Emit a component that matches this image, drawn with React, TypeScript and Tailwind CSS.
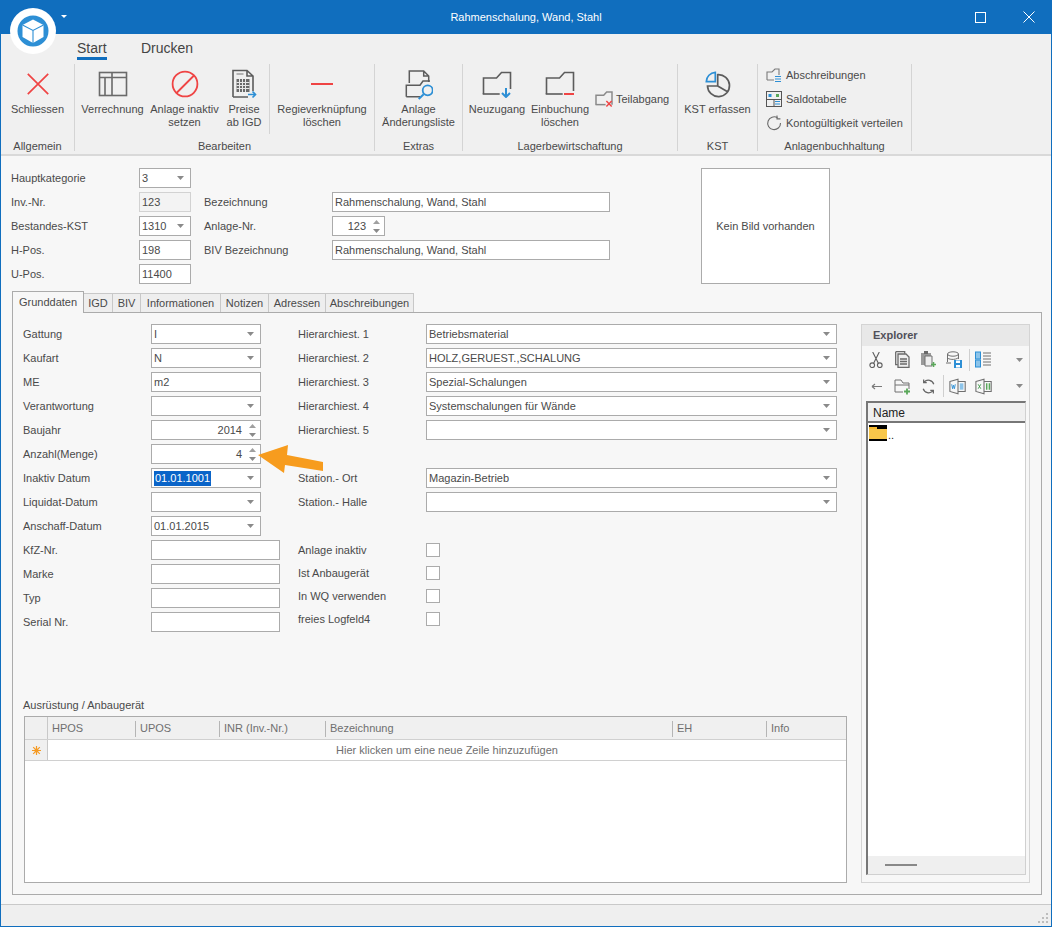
import React from "react";

const Caret = () => (
  <svg width="7" height="4" viewBox="0 0 7 4" className="shrink-0"><path d="M0 0h7L3.5 4z" fill="#8a8a8a" /></svg>
);
const Spin = () => (
  <div className="flex flex-col items-center gap-[3px] w-[9px] shrink-0">
    <svg width="7" height="5" viewBox="0 0 7 5"><path d="M0 4L3.5 0 7 4z" fill="#a0a0a0" /></svg>
    <svg width="7" height="5" viewBox="0 0 7 5"><path d="M0 1h7L3.5 5z" fill="#8a8a8a" /></svg>
  </div>
);

type FProps = { w: string; v?: string; kind?: "text" | "select" | "spin"; disabled?: boolean; sel?: boolean };
function Field({ w, v = "", kind = "text", disabled, sel }: FProps) {
  return (
    <div className={`${w} h-[20px] shrink-0 flex items-center border ${disabled ? "bg-[#f3f3f3] border-[#d2d2d2]" : "bg-white border-[#ababab]"} ${kind === "spin" ? "pl-1 pr-[3px]" : "pl-[2px] pr-[6px]"}`}>
      {kind === "spin" ? (
        <span className="flex-1 text-right pr-[6px] whitespace-nowrap">{v}</span>
      ) : sel ? (
        <span className="flex-1"><span className="bg-[#0a64c8] text-white inline-block leading-[15px] pl-[1px] pr-[1px]">{v}</span></span>
      ) : (
        <span className="flex-1 whitespace-nowrap">{v}</span>
      )}
      {kind === "select" && <Caret />}
      {kind === "spin" && <Spin />}
    </div>
  );
}

function Row({ label, lw, children, h = "h-[24px]" }: { label: string; lw: string; children?: React.ReactNode; h?: string }) {
  return (
    <div className={`flex items-center ${h}`}>
      <span className={`${lw} shrink-0 whitespace-nowrap`}>{label}</span>
      {children}
    </div>
  );
}

const RedX = () => (
  <svg width="26" height="26" viewBox="0 0 28 28"><path d="M3 3l22 22M25 3L3 25" stroke="#ef4444" strokeWidth="1.8" fill="none" /></svg>
);
const TableIco = () => (
  <svg width="30" height="26" viewBox="0 0 30 26" fill="none" stroke="#6a6a6a" strokeWidth="1.6"><rect x="1.5" y="1.5" width="27" height="23" /><path d="M1.5 6.5h27M7 6.5v18M14 1.5v23" /></svg>
);
const Ban = () => (
  <svg width="28" height="28" viewBox="0 0 28 28" fill="none" stroke="#ef4444" strokeWidth="1.8"><circle cx="14" cy="14" r="12.4" /><path d="M5.5 23L23 5.5" /></svg>
);
const Preise = () => (
  <svg width="28" height="30" viewBox="0 0 28 30" fill="none">
    <path d="M3 28V1.5h14L23 7v15M17 1.5V7h6M3 28h15" stroke="#5c5c5c" strokeWidth="1.6" />
    <path d="M6.5 5h7" stroke="#8a8a8a" strokeWidth="1.2" />
    <path d="M6.5 10h13v13h-13z" fill="#6a6a6a" />
    <path d="M6.5 13.5h13M6.5 16.5h13M6.5 19.5h13M9.5 10v13M12.5 10v13M15.5 10v13" stroke="#e8e8e8" strokeWidth="1" />
    <path d="M18 25.5h7M22.5 22.5l3 3-3 3" stroke="#2d8fd5" strokeWidth="1.6" />
  </svg>
);
const Minus = () => (
  <svg width="22" height="4" viewBox="0 0 22 4"><path d="M0 2h22" stroke="#ef4444" strokeWidth="2" /></svg>
);
const Aenderung = () => (
  <svg width="28" height="31" viewBox="8 3 28 31" fill="none">
    <path d="M12.3 17V5h14.4l5 5v6M26.7 5v5h5" stroke="#5c5c5c" strokeWidth="1.5" />
    <path d="M9.3 30.7V19.3H23l3-4.3h7M9.3 30.7H23" stroke="#5c5c5c" strokeWidth="1.5" />
    <circle cx="30.7" cy="24.3" r="5" stroke="#2d8fd5" strokeWidth="1.8" />
    <path d="M26.7 28.3l-5 4.7" stroke="#2d8fd5" strokeWidth="2" />
  </svg>
);
const Folder = ({ small, end, children }: { small?: boolean; end: number; children?: React.ReactNode }) => (
  <svg width={small ? 18 : 30} height={small ? 16 : 27} viewBox="0 0 30 27" fill="none">
    <path d={`M1.5 23V7h13l5-5.5h9V${end}`} stroke={small ? "#8a8a8a" : "#5c5c5c"} strokeWidth={small ? 2.5 : 1.6} />
    <path d="M.7 23h17" stroke={small ? "#8a8a8a" : "#5c5c5c"} strokeWidth={small ? 2.5 : 1.6} />
    {children}
  </svg>
);
const Pie = () => (
  <svg width="26" height="27" viewBox="8 6 26 27" fill="none">
    <path d="M20.7 9.7A11 11 0 1 1 10.5 21h10.2zM20.7 21L31 27" stroke="#5c5c5c" strokeWidth="1.7" />
    <path d="M9.3 16.7h9V7.3a9.5 9.5 0 0 0-9 9.4z" stroke="#2d8fd5" strokeWidth="1.7" />
  </svg>
);
const SmAb = () => (
  <svg width="16" height="16" viewBox="0 0 16 16" fill="none">
    <path d="M1 13V5h5l3-3h4v6M1 13h7" stroke="#7a7a7a" strokeWidth="1.1" />
    <path d="M9 9.5h6M9 12h6M9 14.5h6" stroke="#2d8fd5" strokeWidth="1.2" />
  </svg>
);
const SmSaldo = () => (
  <svg width="16" height="16" viewBox="0 0 16 16" fill="none">
    <rect x=".5" y=".5" width="15" height="15" stroke="#555" />
    <path d="M.5 8.5h15M8 8.5v7" stroke="#555" />
    <rect x="2.5" y="3" width="3" height="3" fill="#2d8fd5" />
    <rect x="10" y="3" width="3" height="3" fill="#5aa85a" />
    <path d="M9 10.5h5M9 13h5" stroke="#2d8fd5" />
  </svg>
);
const SmRefresh = () => (
  <svg width="16" height="16" viewBox="0 0 16 16" fill="none">
    <path d="M11.5 2.8A6.4 6.4 0 1 0 14.5 8" stroke="#6a6a6a" strokeWidth="1.1" />
    <path d="M11 0.5v3.4h3.4" stroke="#6a6a6a" strokeWidth="1.1" />
  </svg>
);

function Big({ w, icon, a, b }: { w: string; icon: React.ReactNode; a: string; b?: string }) {
  return (
    <div className={`${w} shrink-0 flex flex-col items-center`}>
      <div className="h-[36px] shrink-0 flex items-center justify-center">{icon}</div>
      <div className="mt-[1px] leading-[13px] text-center whitespace-nowrap">{a}</div>
      {b && <div className="leading-[13px] text-center whitespace-nowrap">{b}</div>}
    </div>
  );
}

function Group({ w, label, children }: { w: string; label: string; children: React.ReactNode }) {
  return (
    <div className={`${w} shrink-0 h-[87px] border-r border-[#d4d4d4] flex flex-col`}>
      <div className="h-[76px] shrink-0 flex pt-[2px]">{children}</div>
      <div className="text-center leading-[13px] whitespace-nowrap">{label}</div>
    </div>
  );
}

const VSep = () => <div className="w-px h-[70px] bg-[#d4d4d4] -mt-[2px] shrink-0" />;

const Tab = ({ w, t, active }: { w: string; t: string; active?: boolean }) => (
  <div className={`${w} shrink-0 flex items-center justify-center border-t border-r ${active ? "h-[22px] bg-[#f7f7f7] border-l border-[#ababab] -mb-px z-10" : "h-[19px] bg-[#eeeeee] border-[#c8c8c8]"}`}>
    {t}
  </div>
);

const Check = () => <div className="w-[14px] h-[14px] border border-[#ababab] bg-white" />;

const Th = ({ w, t }: { w: string; t: string }) => (
  <div className={`${w} shrink-0 h-[23px] flex items-center pl-[4px] text-[#6f6f6f]`}>
    <span className="flex-1 whitespace-nowrap">{t}</span>
    <span className="w-px h-[16px] bg-[#b5b5b5]" />
  </div>
);

const TbSep = () => <div className="w-px h-[22px] bg-[#cfcfcf] shrink-0" />;
const Cell = ({ children }: { children: React.ReactNode }) => <div className="w-[26px] shrink-0 flex items-center justify-center">{children}</div>;

export default function App() {
  return (
    <div className="relative w-[1052px] h-[927px] overflow-hidden flex flex-col bg-[#f7f7f7] border-x border-b border-[#106ebe] text-[#4a4a4a] text-[11px] leading-[13px] font-['Liberation_Sans',Arial,sans-serif]">
      {/* Title bar */}
      <div className="h-[34px] shrink-0 bg-[#106ebe] -mx-px flex items-center text-white relative">
        <div className="flex-1 text-center">Rahmenschalung, Wand, Stahl</div>
        <div className="absolute right-[17px] top-0 h-[34px] flex items-center gap-[37px]">
          <svg width="11" height="11" viewBox="0 0 11 11"><rect x=".5" y=".5" width="10" height="10" fill="none" stroke="#fff" /></svg>
          <svg width="12" height="12" viewBox="0 0 12 12"><path d="M.5.5l11 11M11.5.5l-11 11" stroke="#fff" fill="none" /></svg>
        </div>
      </div>

      {/* App button */}
      <div className="absolute left-[9px] top-[8px] w-[46px] h-[46px] rounded-full bg-white z-20 flex items-center justify-center">
        <svg width="32" height="32" viewBox="0 0 32 32">
          <circle cx="16" cy="16" r="15.5" fill="#2d8fd5" />
          <path d="M16 4.5l10.5 5.5v12L16 28 5.5 22V10z" fill="#fff" />
          <path d="M5.5 10L16 15.5 26.5 10M16 15.5V28" stroke="#2d8fd5" strokeWidth="1.1" fill="none" />
        </svg>
      </div>
      <svg className="absolute left-[60px] top-[15px] z-20" width="6" height="3" viewBox="0 0 6 3"><path d="M0 0h6L3 3z" fill="#fff" /></svg>

      {/* Ribbon */}
      <div className="h-[122px] shrink-0 bg-[#f0f0f0] border-b-2 border-[#d9d9d9] flex flex-col">
        <div className="h-[30px] shrink-0 flex pl-[76px] text-[14px] text-[#444]">
          <div className="relative pt-[5px] w-[30px] leading-[18px] whitespace-nowrap">
            Start
            <div className="absolute left-0 w-[30px] top-[23px] h-[3px] bg-[#106ebe]" />
          </div>
          <div className="pt-[5px] ml-[34px] leading-[18px]">Drucken</div>
        </div>
        <div className="flex">
          <Group w="w-[74px]" label="Allgemein">
            <Big w="w-[73px]" icon={<RedX />} a="Schliessen" />
          </Group>
          <Group w="w-[300px]" label="Bearbeiten">
            <Big w="w-[75px]" icon={<TableIco />} a="Verrechnung" />
            <Big w="w-[69px]" icon={<Ban />} a="Anlage inaktiv" b="setzen" />
            <Big w="w-[50px]" icon={<Preise />} a="Preise" b="ab IGD" />
            <VSep />
            <Big w="w-[104px]" icon={<Minus />} a="Regieverknüpfung" b="löschen" />
          </Group>
          <Group w="w-[88px]" label="Extras">
            <Big w="w-[87px]" icon={<Aenderung />} a="Anlage" b="Änderungsliste" />
          </Group>
          <Group w="w-[215px]" label="Lagerbewirtschaftung">
            <Big w="w-[68px]" icon={<Folder end={18}><path d="M24 17v9M20 22l4 4 4-4" stroke="#2d8fd5" strokeWidth="2" /></Folder>} a="Neuzugang" />
            <Big w="w-[58px]" icon={<Folder end={20}><path d="M19 23h10" stroke="#ef4444" strokeWidth="2" /></Folder>} a="Einbuchung" b="löschen" />
            <div className="flex items-center gap-[3px] h-[14px] ml-[6px] mt-[26px] whitespace-nowrap">
              <Folder small end={23}><path d="M19 17l9 9M28 17l-9 9" stroke="#ef4444" strokeWidth="2.5" /></Folder>
              <span>Teilabgang</span>
            </div>
          </Group>
          <Group w="w-[80px]" label="KST">
            <Big w="w-[79px]" icon={<Pie />} a="KST erfassen" />
          </Group>
          <Group w="w-[154px]" label="Anlagenbuchhaltung">
            <div className="flex flex-col pl-[8px] -mt-[3px]">
              <div className="h-[24px] flex items-center gap-[4px] whitespace-nowrap"><SmAb />Abschreibungen</div>
              <div className="h-[24px] flex items-center gap-[4px] whitespace-nowrap"><SmSaldo />Saldotabelle</div>
              <div className="h-[24px] flex items-center gap-[4px] whitespace-nowrap"><SmRefresh />Kontogültigkeit verteilen</div>
            </div>
          </Group>
        </div>
      </div>

      {/* Header form */}
      <div className="flex shrink-0 pl-[10px] pt-[10px] h-[134px]">
        <div className="flex flex-col w-[193px] shrink-0">
          <Row label="Hauptkategorie" lw="w-[128px]"><Field w="w-[52px]" v="3" kind="select" /></Row>
          <Row label="Inv.-Nr." lw="w-[128px]"><Field w="w-[52px]" v="123" disabled /></Row>
          <Row label="Bestandes-KST" lw="w-[128px]"><Field w="w-[52px]" v="1310" kind="select" /></Row>
          <Row label="H-Pos." lw="w-[128px]"><Field w="w-[52px]" v="198" /></Row>
          <Row label="U-Pos." lw="w-[128px]"><Field w="w-[52px]" v="11400" /></Row>
        </div>
        <div className="flex flex-col w-[497px] shrink-0 pt-[24px]">
          <Row label="Bezeichnung" lw="w-[128px]"><Field w="w-[278px]" v="Rahmenschalung, Wand, Stahl" /></Row>
          <Row label="Anlage-Nr." lw="w-[128px]"><Field w="w-[53px]" v="123" kind="spin" /></Row>
          <Row label="BIV Bezeichnung" lw="w-[128px]"><Field w="w-[278px]" v="Rahmenschalung, Wand, Stahl" /></Row>
        </div>
        <div className="w-[129px] h-[116px] mt-[2px] bg-white border border-[#ababab] flex items-center justify-center">Kein Bild vorhanden</div>
      </div>

      {/* Tabs */}
      <div className="flex items-end ml-[11px] h-[22px] shrink-0">
        <Tab w="w-[72px]" t="Grunddaten" active />
        <Tab w="w-[29px]" t="IGD" />
        <Tab w="w-[28px]" t="BIV" />
        <Tab w="w-[80px]" t="Informationen" />
        <Tab w="w-[48px]" t="Notizen" />
        <Tab w="w-[57px]" t="Adressen" />
        <Tab w="w-[88px]" t="Abschreibungen" />
      </div>

      {/* Tab panel */}
      <div className="ml-[11px] mr-[9px] h-[583px] shrink-0 border border-[#ababab] flex pl-[10px] pt-[9px]">
        <div className="w-[827px] shrink-0 flex flex-col">
          <div className="flex h-[216px]">
            <div className="w-[275px] shrink-0 flex flex-col">
              <Row label="Gattung" lw="w-[128px]"><Field w="w-[110px]" v="I" kind="select" /></Row>
              <Row label="Kaufart" lw="w-[128px]"><Field w="w-[110px]" v="N" kind="select" /></Row>
              <Row label="ME" lw="w-[128px]"><Field w="w-[110px]" v="m2" /></Row>
              <Row label="Verantwortung" lw="w-[128px]"><Field w="w-[110px]" kind="select" /></Row>
              <Row label="Baujahr" lw="w-[128px]"><Field w="w-[110px]" v="2014" kind="spin" /></Row>
              <Row label="Anzahl(Menge)" lw="w-[128px]"><Field w="w-[110px]" v="4" kind="spin" /></Row>
              <Row label="Inaktiv Datum" lw="w-[128px]"><Field w="w-[110px]" v="01.01.1001" kind="select" sel /></Row>
              <Row label="Liquidat-Datum" lw="w-[128px]"><Field w="w-[110px]" kind="select" /></Row>
              <Row label="Anschaff-Datum" lw="w-[128px]"><Field w="w-[110px]" v="01.01.2015" kind="select" /></Row>
            </div>
            <div className="flex-1 flex flex-col">
              <Row label="Hierarchiest. 1" lw="w-[128px]"><Field w="w-[411px]" v="Betriebsmaterial" kind="select" /></Row>
              <Row label="Hierarchiest. 2" lw="w-[128px]"><Field w="w-[411px]" v="HOLZ,GERUEST.,SCHALUNG" kind="select" /></Row>
              <Row label="Hierarchiest. 3" lw="w-[128px]"><Field w="w-[411px]" v="Spezial-Schalungen" kind="select" /></Row>
              <Row label="Hierarchiest. 4" lw="w-[128px]"><Field w="w-[411px]" v="Systemschalungen für Wände" kind="select" /></Row>
              <Row label="Hierarchiest. 5" lw="w-[128px]"><Field w="w-[411px]" kind="select" /></Row>
              <div className="h-[24px]" />
              <Row label="Station.- Ort" lw="w-[128px]"><Field w="w-[411px]" v="Magazin-Betrieb" kind="select" /></Row>
              <Row label="Station.- Halle" lw="w-[128px]"><Field w="w-[411px]" kind="select" /></Row>
            </div>
          </div>
          <div className="flex h-[157px]">
            <div className="w-[275px] shrink-0 flex flex-col">
              <Row label="KfZ-Nr." lw="w-[128px]"><Field w="w-[129px]" /></Row>
              <Row label="Marke" lw="w-[128px]"><Field w="w-[129px]" /></Row>
              <Row label="Typ" lw="w-[128px]"><Field w="w-[129px]" /></Row>
              <Row label="Serial Nr." lw="w-[128px]"><Field w="w-[129px]" /></Row>
            </div>
            <div className="flex flex-col">
              <Row label="Anlage inaktiv" lw="w-[128px] pt-[2px]" h="h-[23px]"><Check /></Row>
              <Row label="Ist Anbaugerät" lw="w-[128px] pt-[2px]" h="h-[23px]"><Check /></Row>
              <Row label="In WQ verwenden" lw="w-[128px] pt-[2px]" h="h-[23px]"><Check /></Row>
              <Row label="freies Logfeld4" lw="w-[128px] pt-[2px]" h="h-[23px]"><Check /></Row>
            </div>
          </div>
          <div className="h-[21px] leading-[13px] pt-[4px]">Ausrüstung / Anbaugerät</div>
          <div className="ml-[1px] w-[823px] h-[167px] shrink-0 border border-[#ababab] bg-white flex flex-col">
            <div className="flex h-[23px] shrink-0 bg-[#f0f0f0] border-b border-[#d0d0d0]">
              <div className="w-[23px] shrink-0 border-r border-[#c8c8c8]" />
              <Th w="w-[88px]" t="HPOS" />
              <Th w="w-[84px]" t="UPOS" />
              <Th w="w-[106px]" t="INR (Inv.-Nr.)" />
              <Th w="w-[347px]" t="Bezeichnung" />
              <Th w="w-[94px]" t="EH" />
              <div className="flex-1 flex items-center pl-[4px] text-[#6f6f6f]">Info</div>
            </div>
            <div className="flex h-[21px] shrink-0 border-b border-[#d0d0d0]">
              <div className="w-[23px] shrink-0 bg-[#f0f0f0] border-r border-[#c8c8c8] flex items-center justify-center">
                <svg width="9" height="9" viewBox="0 0 9 9"><path d="M4.5 0v9M0 4.5h9M1.2 1.2l6.6 6.6M7.8 1.2L1.2 7.8" stroke="#f59a23" strokeWidth="1.2" /><circle cx="4.5" cy="4.5" r="2" fill="#f59a23" /></svg>
              </div>
              <div className="flex-1 flex items-center justify-center text-[#6f6f6f]">Hier klicken um eine neue Zeile hinzuzufügen</div>
            </div>
          </div>
        </div>

        {/* Explorer */}
        <div className="ml-[11px] mt-[2px] w-[169px] h-[559px] shrink-0 border border-[#d4d4d4] bg-[#f7f7f7] flex flex-col">
          <div className="h-[21px] shrink-0 bg-[#e8e8e8] flex items-center pl-[11px] font-bold text-[#50505a]">Explorer</div>
          <div className="h-[27px] shrink-0 flex items-center pl-[1px] relative">
            <Cell><svg width="14" height="16" viewBox="0 0 14 17" fill="none" stroke="#606060" strokeWidth="1.2"><circle cx="3" cy="14" r="2.5" /><circle cx="11" cy="14" r="2.5" /><path d="M4.5 12L10.5 0M9.5 12L3.5 0" /></svg></Cell>
            <Cell><svg width="15" height="17" viewBox="0 0 15 17" fill="none" stroke="#6a6a6a" strokeWidth="1.3"><path d="M.7.7h9v2M.7.7v13h2" /><path d="M3 3h8l3 3v10.3H3z" fill="#efefef" /><path d="M5 8h7M5 10.5h7M5 13h7" /></svg></Cell>
            <Cell><svg width="17" height="17" viewBox="0 0 17 17" fill="none"><path d="M1 2h10v12H1z" fill="#9a9a9a" /><path d="M4 0h4v3H4z" fill="#6a6a6a" /><path d="M5 5h7v10H5z" fill="#eee" stroke="#707070" /><path d="M11 13.5h5M13.5 11v5" stroke="#5aa85a" strokeWidth="1.6" /></svg></Cell>
            <Cell><svg width="18" height="17" viewBox="0 0 18 17" fill="none"><ellipse cx="8" cy="3" rx="5.5" ry="2.2" stroke="#707070" /><path d="M2.5 3v8M13.5 3v5M2.5 6.5c0 2 8 3 11 0" stroke="#707070" /><path d="M1 12h5" stroke="#707070" /><rect x="9" y="9" width="8" height="8" fill="#2d8fd5" /><rect x="11" y="9.5" width="4" height="2.5" fill="#fff" /><rect x="11" y="14" width="4" height="2.5" fill="#fff" /></svg></Cell>
            <div className="ml-[2px]"><TbSep /></div>
            <Cell><svg width="16" height="17" viewBox="0 0 16 17"><rect x=".5" y="1" width="5" height="7" fill="#8cc4ea" stroke="#2d8fd5" /><rect x=".5" y="9" width="5" height="7" fill="#8cc4ea" stroke="#2d8fd5" /><path d="M8 2h8M8 5h8M8 8h8M8 11h8M8 14h8" stroke="#707070" /></svg></Cell>
            <svg className="absolute right-[6px] top-[12px]" width="7" height="4" viewBox="0 0 7 4"><path d="M0 0h7L3.5 4z" fill="#8a8a8a" /></svg>
          </div>
          <div className="h-[26px] shrink-0 flex items-center pl-[1px] relative">
            <Cell><svg width="12" height="7" viewBox="0 0 12 7" fill="none"><path d="M2 3.5h10M2 3.5l3-2.5M2 3.5l3 2.5" stroke="#7a7a7a" strokeWidth="1.1" /></svg></Cell>
            <Cell><svg width="17" height="17" viewBox="0 0 17 17" fill="none" stroke="#707070"><path d="M1 14V2h6l2 3h6v6M1 14h8M1 7h14" /><path d="M10 13.5h6M13 10.5v6" stroke="#5aa85a" strokeWidth="1.8" /></svg></Cell>
            <Cell><svg width="15" height="15" viewBox="0 0 17 17" fill="none" stroke="#666" strokeWidth="1.4"><path d="M14.5 6A6.5 6.5 0 0 0 3.5 3.5M2.5 11A6.5 6.5 0 0 0 13.5 13.5M3 .5v3.5h3.5M14 16.5V13h-3.5" /></svg></Cell>
            <div className="ml-[2px]"><TbSep /></div>
            <div className="ml-[1px]"><Cell><svg width="18" height="17" viewBox="0 0 20 17" fill="none"><path d="M1 3l9-2.5v16L1 14z" stroke="#707070" strokeWidth="1.2" /><path d="M10 3h8v11h-8" stroke="#707070" strokeWidth="1.2" /><rect x="12" y="5" width="4" height="7" fill="#8cc4ea" /><path d="M3 6l1 5 1-4 1 4 1-5" stroke="#2d8fd5" /></svg></Cell></div>
            <Cell><svg width="18" height="17" viewBox="0 0 20 17" fill="none"><path d="M1 3l9-2.5v16L1 14z" stroke="#707070" strokeWidth="1.2" /><path d="M10 3h8v11h-8" stroke="#707070" strokeWidth="1.2" /><path d="M13 5v7M16 5v7" stroke="#5aa85a" strokeWidth="1.6" /><path d="M3.5 6l3 5M6.5 6l-3 5" stroke="#3f9a4a" /></svg></Cell>
            <svg className="absolute right-[6px] top-[11px]" width="7" height="4" viewBox="0 0 7 4"><path d="M0 0h7L3.5 4z" fill="#8a8a8a" /></svg>
          </div>
          <div className="ml-[4px] mt-[2px] w-[160px] h-[474px] border border-[#d0d0d0] border-l-2 border-l-[#777] border-t-2 border-t-[#777] bg-white flex flex-col">
            <div className="h-[20px] shrink-0 bg-[#f0f0f0] border-b-2 border-[#777] flex items-center pl-[5px] pt-[3px] text-[12px] text-[#222]">Name</div>
            <div className="flex-1 pl-[1px] pt-[2px]">
              <div className="flex items-end gap-[1px] h-[16px] text-[#222]">
                <svg width="18" height="16" viewBox="0 0 18 16"><rect width="18" height="16" fill="#000" /><rect x="0" y="2" width="8" height="3" fill="#f5b82e" /><rect x="0" y="4" width="18" height="10" fill="#f8c64a" /></svg>
                <span className="leading-[12px]">..</span>
              </div>
            </div>
            <div className="h-[18px] shrink-0 bg-[#efefef] flex items-center pl-[17px]"><div className="w-[32px] h-[2px] bg-[#888]" /></div>
          </div>
        </div>
      </div>

      {/* Status bar */}
      <div className="mt-[9px] flex-1 bg-[#efefef] border-t border-[#c9c9c9] relative">
        <svg className="absolute right-[2px] bottom-[2px]" width="11" height="11" viewBox="0 0 11 11" fill="#bdbdbd">
          <rect x="8" y="0" width="2" height="2" /><rect x="4" y="4" width="2" height="2" /><rect x="8" y="4" width="2" height="2" /><rect x="0" y="8" width="2" height="2" /><rect x="4" y="8" width="2" height="2" /><rect x="8" y="8" width="2" height="2" />
        </svg>
      </div>

      {/* Annotation arrow */}
      <svg className="absolute left-[257px] top-[444px] z-30" width="68" height="30" viewBox="0 0 68 30">
        <path d="M0 11L30 1l-1 10 36 7v9l-38-6-1 8z" fill="#f79c1e" />
      </svg>
    </div>
  );
}
